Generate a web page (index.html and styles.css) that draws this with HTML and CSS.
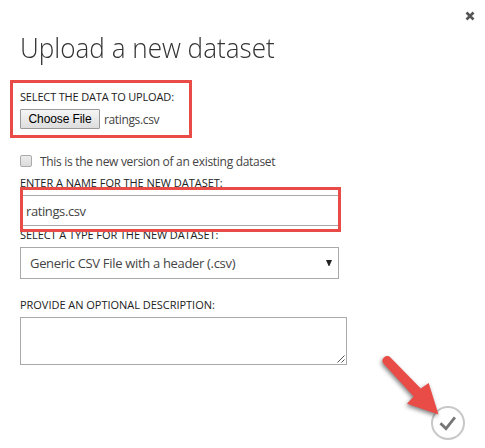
FILE: index.html
```html
<!DOCTYPE html>
<html lang="en">
<head>
<meta charset="utf-8">
<title>Upload a new dataset</title>
<link rel="stylesheet" href="styles.css">
</head>
<body>
<main class="dialog">
  <button class="close" aria-label="Close"><svg width="10" height="10" viewBox="0 0 10 10"><path d="M1.5 1.5 8.5 8.5M8.5 1.5 1.5 8.5"/></svg></button>
  <h1 class="title"><span>Upload a new dataset</span></h1>
  <section class="file-field">
    <div class="label"><span class="l1">SELECT THE DATA TO UPLOAD:</span></div>
    <div class="file-row"><button class="choose">Choose File</button><span class="filename">ratings.csv</span></div>
    <div class="mark mark-file"></div>
  </section>
  <label class="check-row"><span class="checkbox"></span><span class="check-text">This is the new version of an existing dataset</span></label>
  <section class="name-field">
    <div class="label"><span class="l2">ENTER A NAME FOR THE NEW DATASET:</span></div>
    <div class="input"><span class="name-value">ratings.csv</span></div>
    <div class="mark mark-name"></div>
  </section>
  <section class="type-field">
    <div class="label"><span class="l3">SELECT A TYPE FOR THE NEW DATASET:</span></div>
    <div class="select"><span class="select-text">Generic CSV File with a header (.csv)</span><svg width="6" height="6" viewBox="0 0 6 6"><path d="M0 0H6L3.4 6H2.6Z"/></svg></div>
  </section>
  <section class="desc-field">
    <div class="label"><span class="l4">PROVIDE AN OPTIONAL DESCRIPTION:</span></div>
    <div class="textarea"><svg width="8" height="8" viewBox="0 0 8 8"><path d="M.5 7.5 7.5 .5M4.5 7.5 7.5 4.5"/></svg></div>
  </section>
  <button class="confirm" aria-label="OK"><svg width="36" height="36" viewBox="0 0 36 36"><circle cx="18" cy="18" r="16"/><path d="M10.4 18.2 16 23.6 24.9 12.4"/></svg></button>
  <svg class="pointer" width="85" height="90" viewBox="375 345 85 90"><path d="M383.4 363.5A4.7 4.7 0 0 1 390 357L420.8 388.5 428.7 383 438.5 414.5 407 403.8 413.7 396.5Z"/></svg>
</main>
</body>
</html>
```
FILE: styles.css
```css
* { box-sizing: border-box; }
body { margin: 0; background: #fff; color: #444; font: 12px "Open Sans", sans-serif; }
button { padding: 0; border: 0; background: none; }
svg { display: block; }
.dialog { position: relative; width: 485px; height: 448px; padding: 28px 20px 0; overflow: hidden; }
.close { position: absolute; left: 465px; top: 11px; }
.close path { fill: none; stroke: #555; stroke-width: 2.6; }
.title { margin: 0; height: 62px; font-size: 28px; font-weight: 300; line-height: 38px; white-space: nowrap; color: #333; }
.title span { display: inline-block; transform: scaleX(.932); transform-origin: 0 50%; }
.label { height: 16px; font-size: 11px; line-height: 14px; white-space: nowrap; color: #222; }
.l1 { letter-spacing: -.16px; }
.l2, .l4 { letter-spacing: -.03px; }
.l3 { letter-spacing: -.08px; }
.file-field { position: relative; height: 65px; }
.file-row { display: flex; align-items: center; gap: 4px; margin-top: 3px; height: 20px; }
.choose { width: 80px; height: 20px; border: 1px solid #999; border-radius: 1px; background: linear-gradient(#f5f5f5, #ddd); font: 12px "Liberation Sans", sans-serif; letter-spacing: -.1px; line-height: 18px; color: #000; white-space: nowrap; }
.filename { letter-spacing: -.36px; }
.mark { position: absolute; border: 3px solid #e94b46; }
.mark-file { left: -10px; top: -10px; width: 182px; height: 58px; }
.check-row { display: flex; gap: 8px; height: 21px; line-height: 14px; white-space: nowrap; }
.check-text { letter-spacing: -.3px; }
.checkbox { width: 12px; height: 12px; border: 1px solid #aaa; border-radius: 2px; background: linear-gradient(#ececec, #dcdcdc); }
.name-field { position: relative; height: 52px; }
.input { display: flex; align-items: center; width: 319px; height: 31px; margin-top: 3px; padding-left: 5px; border: 1px solid #a9a9a9; font-size: 13px; letter-spacing: -.4px; }
.mark-name { left: 0; top: 11px; width: 321px; height: 45px; }
.type-field { height: 70px; }
.select { display: flex; align-items: center; justify-content: space-between; width: 319px; height: 32px; margin-top: 3px; padding: 0 6px 0 9px; border: 1px solid #a9a9a9; white-space: nowrap; font-size: 13px; letter-spacing: -.32px; }
.select path { fill: #222; }
.textarea { display: flex; align-items: flex-end; justify-content: flex-end; width: 327px; height: 48px; padding: 1px; margin-top: 3px; border: 1px solid #a9a9a9; }
.textarea path { fill: none; stroke: #555; }
.confirm { position: absolute; left: 430px; top: 405px; }
.confirm circle { fill: #fff; stroke: #c8c8c8; stroke-width: 2; }
.confirm path { fill: none; stroke: #777; stroke-width: 2.8; }
.pointer { position: absolute; left: 375px; top: 345px; filter: drop-shadow(-1px 2px 2px rgba(0,0,0,.5)); }
.pointer path { fill: #e94b46; }
```
